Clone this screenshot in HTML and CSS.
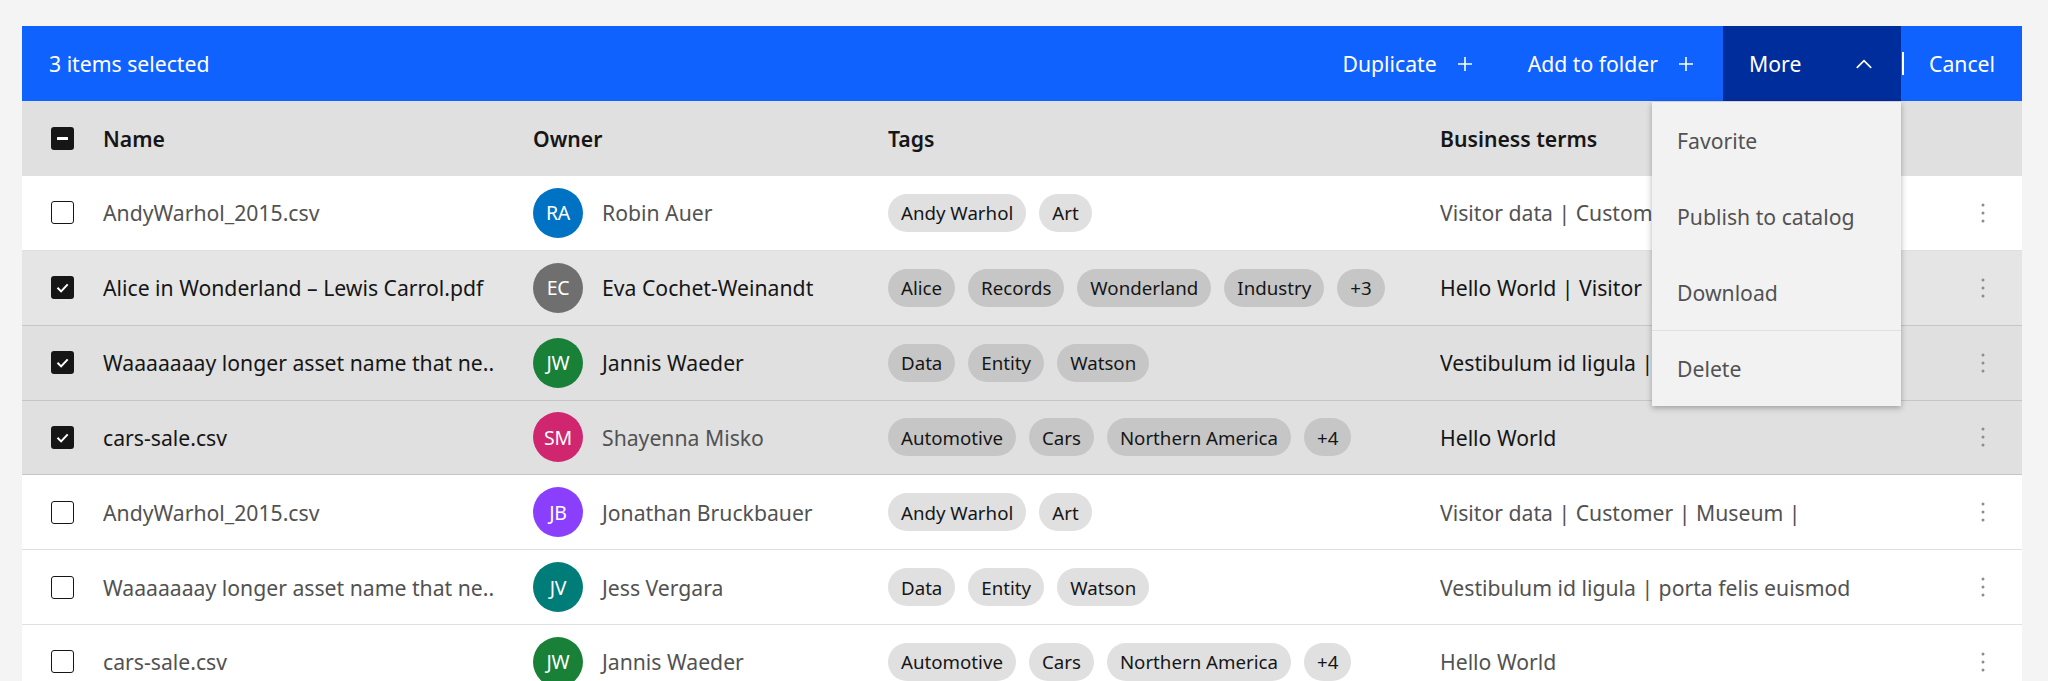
FILE: index.html
```html
<!DOCTYPE html>
<html lang="en">
<head>
<meta charset="utf-8">
<title>Data table - batch actions</title>
<link rel="stylesheet" href="styles.css">
</head>
<body>
<div class="page">
  <div class="table">
    <div class="batch">
      <div class="batch-summary">3 items selected</div>
      <div class="batch-actions">
        <button class="batch-btn">Duplicate <svg class="ico-plus" viewBox="0 0 14 14"><path d="M7 0v14M0 7h14"/></svg></button>
        <button class="batch-btn">Add to folder <svg class="ico-plus" viewBox="0 0 14 14"><path d="M7 0v14M0 7h14"/></svg></button>
        <div class="more-wrap">
          <button class="batch-btn more">More <svg class="ico-chev" viewBox="0 0 16 10"><path d="M0.8 8.8L8 1.6l7.2 7.2"/></svg></button>
          <ul class="menu">
            <li class="menu-item">Favorite</li>
            <li class="menu-item">Publish to catalog</li>
            <li class="menu-item">Download</li>
            <li class="menu-item sep">Delete</li>
          </ul>
        </div>
        <span class="divider"></span>
        <button class="batch-btn cancel">Cancel</button>
      </div>
    </div>

    <div class="row head">
      <div class="cell cb"><span class="checkbox mixed"><svg viewBox="0 0 23 23"><rect x="6" y="10" width="11" height="3" rx="0.5"/></svg></span></div>
      <div class="cell">Name</div>
      <div class="cell">Owner</div>
      <div class="cell">Tags</div>
      <div class="cell">Business terms</div>
      <div class="cell"></div>
    </div>

    <div class="row">
      <div class="cell cb"><span class="checkbox"></span></div>
      <div class="cell">AndyWarhol_2015.csv</div>
      <div class="cell owner"><span class="avatar blue">RA</span>Robin Auer</div>
      <div class="cell tags"><span class="tag">Andy Warhol</span><span class="tag">Art</span></div>
      <div class="cell">Visitor data | Customer | Museum |</div>
      <div class="cell kebab"><svg viewBox="0 0 24 24"><circle cx="12" cy="4" r="1.5"/><circle cx="12" cy="12" r="1.5"/><circle cx="12" cy="20" r="1.5"/></svg></div>
    </div>

    <div class="row selected hover">
      <div class="cell cb"><span class="checkbox checked"><svg viewBox="0 0 23 23"><path d="M6.5 11.8l3.6 3.6 6.6-7"/></svg></span></div>
      <div class="cell">Alice in Wonderland – Lewis Carrol.pdf</div>
      <div class="cell owner"><span class="avatar gray">EC</span>Eva Cochet-Weinandt</div>
      <div class="cell tags"><span class="tag">Alice</span><span class="tag">Records</span><span class="tag">Wonderland</span><span class="tag">Industry</span><span class="tag">+3</span></div>
      <div class="cell">Hello World | Visitor | Customer |</div>
      <div class="cell kebab"><svg viewBox="0 0 24 24"><circle cx="12" cy="4" r="1.5"/><circle cx="12" cy="12" r="1.5"/><circle cx="12" cy="20" r="1.5"/></svg></div>
    </div>

    <div class="row selected">
      <div class="cell cb"><span class="checkbox checked"><svg viewBox="0 0 23 23"><path d="M6.5 11.8l3.6 3.6 6.6-7"/></svg></span></div>
      <div class="cell">Waaaaaaay longer asset name that ne..</div>
      <div class="cell owner"><span class="avatar green">JW</span>Jannis Waeder</div>
      <div class="cell tags"><span class="tag">Data</span><span class="tag">Entity</span><span class="tag">Watson</span></div>
      <div class="cell">Vestibulum id ligula | porta felis euismod</div>
      <div class="cell kebab"><svg viewBox="0 0 24 24"><circle cx="12" cy="4" r="1.5"/><circle cx="12" cy="12" r="1.5"/><circle cx="12" cy="20" r="1.5"/></svg></div>
    </div>

    <div class="row selected">
      <div class="cell cb"><span class="checkbox checked"><svg viewBox="0 0 23 23"><path d="M6.5 11.8l3.6 3.6 6.6-7"/></svg></span></div>
      <div class="cell">cars-sale.csv</div>
      <div class="cell owner muted"><span class="avatar magenta">SM</span>Shayenna Misko</div>
      <div class="cell tags"><span class="tag">Automotive</span><span class="tag">Cars</span><span class="tag">Northern America</span><span class="tag">+4</span></div>
      <div class="cell">Hello World</div>
      <div class="cell kebab"><svg viewBox="0 0 24 24"><circle cx="12" cy="4" r="1.5"/><circle cx="12" cy="12" r="1.5"/><circle cx="12" cy="20" r="1.5"/></svg></div>
    </div>

    <div class="row">
      <div class="cell cb"><span class="checkbox"></span></div>
      <div class="cell">AndyWarhol_2015.csv</div>
      <div class="cell owner"><span class="avatar purple">JB</span>Jonathan Bruckbauer</div>
      <div class="cell tags"><span class="tag">Andy Warhol</span><span class="tag">Art</span></div>
      <div class="cell">Visitor data | Customer | Museum |</div>
      <div class="cell kebab"><svg viewBox="0 0 24 24"><circle cx="12" cy="4" r="1.5"/><circle cx="12" cy="12" r="1.5"/><circle cx="12" cy="20" r="1.5"/></svg></div>
    </div>

    <div class="row">
      <div class="cell cb"><span class="checkbox"></span></div>
      <div class="cell">Waaaaaaay longer asset name that ne..</div>
      <div class="cell owner"><span class="avatar teal">JV</span>Jess Vergara</div>
      <div class="cell tags"><span class="tag">Data</span><span class="tag">Entity</span><span class="tag">Watson</span></div>
      <div class="cell">Vestibulum id ligula | porta felis euismod</div>
      <div class="cell kebab"><svg viewBox="0 0 24 24"><circle cx="12" cy="4" r="1.5"/><circle cx="12" cy="12" r="1.5"/><circle cx="12" cy="20" r="1.5"/></svg></div>
    </div>

    <div class="row">
      <div class="cell cb"><span class="checkbox"></span></div>
      <div class="cell">cars-sale.csv</div>
      <div class="cell owner"><span class="avatar green">JW</span>Jannis Waeder</div>
      <div class="cell tags"><span class="tag">Automotive</span><span class="tag">Cars</span><span class="tag">Northern America</span><span class="tag">+4</span></div>
      <div class="cell">Hello World</div>
      <div class="cell kebab"><svg viewBox="0 0 24 24"><circle cx="12" cy="4" r="1.5"/><circle cx="12" cy="12" r="1.5"/><circle cx="12" cy="20" r="1.5"/></svg></div>
    </div>
  </div>
</div>
</body>
</html>
```

FILE: styles.css
```css
* { box-sizing: border-box; }

html, body {
  margin: 0;
  padding: 0;
  height: 100%;
  overflow: hidden;
  background: #f4f4f4;
}

body {
  font-family: "Noto Sans", "Open Sans", "Liberation Sans", sans-serif;
  font-size: 21.2px;
  color: #161616;
}

.page {
  padding: 26px 26px 0 22px;
}

.table {
  width: 2000px;
  position: relative;
}

/* batch action bar */
.batch {
  height: 75px;
  background: #0f62fe;
  color: #fff;
  display: flex;
  align-items: center;
  justify-content: space-between;
  padding-left: 27px;
}

.batch-actions {
  display: flex;
  align-items: stretch;
  height: 100%;
}

.batch-btn {
  font: inherit;
  color: #fff;
  background: transparent;
  border: 0;
  margin: 0;
  display: flex;
  align-items: center;
  gap: 21px;
  padding: 0 30px 0 26px;
  height: 100%;
  cursor: pointer;
}

.ico-plus {
  width: 14px;
  height: 14px;
  fill: none;
  stroke: #fff;
  stroke-width: 1.6;
}

.more-wrap {
  position: relative;
  height: 100%;
}

.batch-btn.more {
  background: #002d9c;
  width: 178px;
  justify-content: space-between;
  padding: 0 29px 0 26px;
}

.ico-chev {
  width: 16px;
  height: 10px;
  fill: none;
  stroke: #fff;
  stroke-width: 1.7;
}

.divider {
  align-self: center;
  width: 2px;
  height: 23px;
  margin-left: 1px;
  background: #fff;
}

.batch-btn.cancel {
  padding: 0 27px 0 25px;
}

.menu {
  position: absolute;
  top: 100%;
  right: 0;
  width: 249px;
  margin: 1px 0 0;
  padding: 0;
  list-style: none;
  background: #f2f2f2;
  box-shadow: 0 2px 6px rgba(0, 0, 0, 0.3);
  z-index: 10;
}

.menu-item {
  height: 76px;
  display: flex;
  align-items: center;
  padding-left: 25px;
  color: #525252;
}

.menu-item.sep {
  border-top: 1px solid #e0e0e0;
}

/* table rows */
.row {
  display: grid;
  grid-template-columns: 81px 430px 355px 552px 1fr 78px;
  height: 74.85px;
  background: #fff;
  border-bottom: 1px solid #e0e0e0;
  color: #525252;
}

.row.head {
  height: 75px;
  background: #e0e0e0;
  border-bottom: 0;
  color: #161616;
  font-weight: 600;
}

.row.selected {
  background: #e0e0e0;
  color: #161616;
  border-bottom-color: #c6c6c6;
}

.row.selected.hover {
  background: #e5e5e5;
}

.cell {
  display: flex;
  align-items: center;
  white-space: nowrap;
  overflow: hidden;
}

.cell.cb {
  padding-left: 29px;
}

.checkbox {
  width: 23px;
  height: 23px;
  border: 1.5px solid #161616;
  border-radius: 3px;
  display: block;
  background: transparent;
}

.checkbox svg {
  display: block;
  width: 100%;
  height: 100%;
}

.checkbox.checked,
.checkbox.mixed {
  background: #161616;
  border: 0;
}

.checkbox.checked path {
  fill: none;
  stroke: #fff;
  stroke-width: 2;
}

.checkbox.mixed rect {
  fill: #fff;
}

.owner {
  gap: 19px;
}

.owner.muted {
  color: #525252;
}

.avatar {
  flex: none;
  width: 50px;
  height: 50px;
  border-radius: 50%;
  display: flex;
  align-items: center;
  justify-content: center;
  color: #fff;
  font-size: 19.5px;
  letter-spacing: -0.3px;
}

.avatar.blue { background: #0072c3; }
.avatar.gray { background: #6f6f6f; }
.avatar.green { background: #198038; }
.avatar.magenta { background: #d02670; }
.avatar.purple { background: #8a3ffc; }
.avatar.teal { background: #007d79; }

.tags {
  gap: 13px;
}

.tag {
  height: 38px;
  border-radius: 19px;
  padding: 0 13px;
  display: inline-flex;
  align-items: center;
  background: #e0e0e0;
  color: #161616;
  font-size: 18.7px;
}

.row.selected .tag {
  background: #c6c6c6;
}

.kebab {
  justify-content: center;
}

.kebab svg {
  width: 24px;
  height: 24px;
  fill: #8d8d8d;
}
```
